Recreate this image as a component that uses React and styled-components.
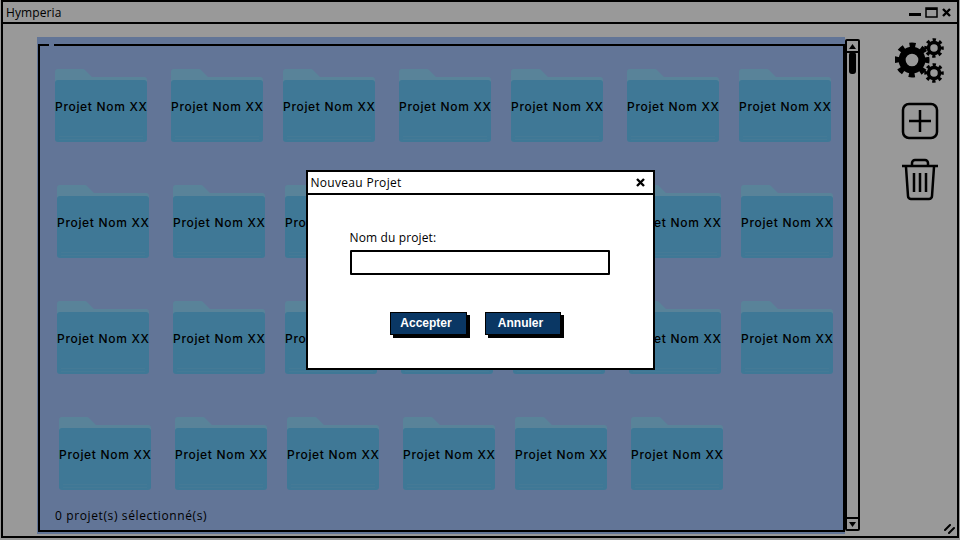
import React from "react";
import styled, { createGlobalStyle } from "styled-components";

const GlobalStyle = createGlobalStyle`
  html, body {
    margin: 0;
    padding: 0;
    width: 960px;
    height: 540px;
    overflow: hidden;
    background: #fff;
  }
`;

const Page = styled.div`
  position: relative;
  width: 960px;
  height: 540px;
  padding: 0 1px 2px 1px;
  box-sizing: border-box;
  font-family: "Open Sans", sans-serif;
  color: #000;
`;

const Window = styled.div`
  display: flex;
  flex-direction: column;
  width: 100%;
  height: 100%;
  box-sizing: border-box;
  border: 2px solid #000;
`;

const TitleBar = styled.div`
  display: flex;
  align-items: center;
  justify-content: space-between;
  height: 20px;
  flex: none;
  padding: 0 6px 0 3px;
  border-bottom: 2px solid #000;
`;

const WindowTitle = styled.span`
  font-size: 12px;
  letter-spacing: 0.1px;
`;

const WindowControls = styled.div`
  display: flex;
  align-items: center;
  gap: 4px;
`;

const Body = styled.div`
  flex: 1;
  display: flex;
  min-height: 0;
  padding: 13px 0 2px 34px;
`;

const Selection = styled.div`
  display: flex;
  width: 808px;
  padding: 7px 0 2px 1px;
  box-sizing: border-box;
  background: #a3c3fc;
`;

const Frame = styled.div`
  position: relative;
  flex: 1;
  display: flex;
  flex-direction: column;
  box-sizing: border-box;
  border: 2px solid #000;
  padding: 23px 0 0 15px;
`;

const FrameNotch = styled.span`
  position: absolute;
  top: -2px;
  left: 9px;
  width: 5px;
  height: 2px;
  background: #a3c3fc;
`;

const FolderRow = styled.div`
  flex: none;
  display: grid;
  grid-template-columns: 116px 112px 116px 112px 116px 112px 92px;
  justify-content: start;
  height: 116px;
  padding-left: ${(p) => p.$indent}px;
`;

const Folder = styled.div`
  display: grid;
  width: 92px;
  height: 73px;
  & > * {
    grid-area: 1 / 1;
  }
`;

const FolderLabel = styled.span`
  align-self: start;
  margin-top: 30px;
  font-family: "Inter", sans-serif;
  font-size: 12px;
  font-weight: 500;
  line-height: 16px;
  white-space: nowrap;
  letter-spacing: 0.68px;
  position: relative;
`;

const StatusText = styled.span`
  position: absolute;
  left: 15px;
  bottom: 6px;
  font-size: 12px;
  letter-spacing: 0.62px;
`;

const Scrollbar = styled.div`
  display: flex;
  flex-direction: column;
  justify-content: space-between;
  width: 15px;
  margin: 2px 0 0 0;
  height: 492px;
  box-sizing: border-box;
  border: 2px solid #000;
  border-radius: 2px;
  position: relative;
`;

const ScrollButton = styled.div`
  height: 10px;
  display: flex;
  align-items: center;
  justify-content: center;
  ${(p) => (p.$down ? "border-top: 2px solid #000;" : "border-bottom: 2px solid #000;")}
`;

const ScrollThumb = styled.div`
  position: absolute;
  top: 11px;
  left: 2px;
  width: 7px;
  height: 22px;
  background: #000;
  border-radius: 3px;
`;

const Tools = styled.div`
  display: flex;
  flex-direction: column;
  align-items: center;
  width: 72px;
  padding: 1px 0 0 24px;
  gap: 18px;
`;

const Grip = styled.svg`
  position: absolute;
  right: 5px;
  bottom: 6px;
`;

const Overlay = styled.div`
  position: absolute;
  inset: 0;
  display: flex;
  align-items: flex-start;
  justify-content: center;
  padding-top: 170px;
  box-sizing: border-box;
  background: rgba(0, 0, 0, 0.4);
`;

const Dialog = styled.div`
  display: flex;
  flex-direction: column;
  width: 349px;
  height: 200px;
  box-sizing: border-box;
  background: #fff;
  border: 2px solid #000;
`;

const DialogTitle = styled.div`
  display: flex;
  align-items: center;
  justify-content: space-between;
  height: 21px;
  flex: none;
  padding: 0 8px 0 3px;
  border-bottom: 2px solid #000;
  font-size: 12px;
  letter-spacing: 0.3px;
`;

const DialogBody = styled.div`
  display: flex;
  flex-direction: column;
  padding: 35px 0 0 42px;
`;

const FieldLabel = styled.label`
  font-size: 12px;
  line-height: 16px;
  letter-spacing: 0.13px;
  margin-bottom: 4px;
`;

const TextInput = styled.div`
  width: 260px;
  height: 25px;
  box-sizing: border-box;
  border: 2px solid #000;
  border-radius: 1px;
  background: #fff;
`;

const Actions = styled.div`
  display: flex;
  gap: 18px;
  margin: 37px 0 0 40px;
`;

const Button = styled.button`
  width: ${(p) => p.$width}px;
  height: 23px;
  box-sizing: border-box;
  border: 1px solid #000;
  padding: 0 4px 1px 0;
  background: #0a3764;
  color: #fff;
  box-shadow: 3px 3px 0 #000;
  font-family: "Liberation Sans", sans-serif;
  font-size: 12px;
  font-weight: 700;
`;

const FolderIcon = () => (
  <svg width="92" height="73" viewBox="0 0 92 73">
    <path
      d="M0 3 a3 3 0 0 1 3 -3 H28 a3 3 0 0 1 2 1 L37 8 H89 a3 3 0 0 1 3 3 V30 H0 Z"
      fill="#95dbff"
    />
    <rect y="11" width="92" height="62" rx="3" fill="#69c8fa" />
    <rect x="4" y="67" width="84" height="1" fill="#74ccfa" />
    <rect x="4" y="70" width="84" height="1" fill="#74ccfa" />
  </svg>
);

const Gear = ({ cx, cy, r, stroke }) => {
  // teeth are a dashed ring, the body a plain ring under it
  const toothR = r * 0.86;
  const length = 2 * Math.PI * toothR;
  return (
    <g fill="none" stroke="#000">
      <circle cx={cx} cy={cy} r={r * 0.58} strokeWidth={stroke} />
      <circle
        cx={cx}
        cy={cy}
        r={toothR}
        strokeWidth={r * 0.34}
        strokeDasharray={`${length / 16} ${length / 16}`}
        transform={`rotate(-11 ${cx} ${cy})`}
      />
    </g>
  );
};

const GearsIcon = () => (
  <svg width="50" height="46" viewBox="0 0 50 46">
    <Gear cx={17} cy={22} r={17} stroke={7} />
    <Gear cx={39} cy={10} r={9.5} stroke={3.5} />
    <Gear cx={39} cy={35} r={9.5} stroke={3.5} />
  </svg>
);

const PlusIcon = () => (
  <svg width="38" height="38" viewBox="0 0 38 38" fill="none" stroke="#000" strokeWidth="2.5">
    <rect x="2" y="2" width="34" height="34" rx="6" />
    <path d="M19 8 V30 M8 19 H30" />
  </svg>
);

const TrashIcon = () => (
  <svg width="38" height="43" viewBox="0 0 38 43" fill="none" stroke="#000" strokeWidth="2.5">
    <path d="M1 8 H37" />
    <path d="M11 7 V5 a3 3 0 0 1 3 -3 H24 a3 3 0 0 1 3 3 V7" />
    <path d="M5 9 L7 38 a3 3 0 0 0 3 3 H28 a3 3 0 0 0 3 -3 L33 9" />
    <path d="M13 15 V34 M19 15 V34 M25 15 V34" />
  </svg>
);

const CloseIcon = () => (
  <svg width="9" height="9" viewBox="0 0 9 9" stroke="#000" strokeWidth="2.4">
    <path d="M1 1 L8 8 M8 1 L1 8" />
  </svg>
);

const rows = [
  { indent: 0, count: 7 },
  { indent: 2, count: 7 },
  { indent: 2, count: 7 },
  { indent: 4, count: 6 },
];

export default function App() {
  return (
    <Page>
      <GlobalStyle />
      <Window>
        <TitleBar>
          <WindowTitle>Hymperia</WindowTitle>
          <WindowControls>
            <svg width="12" height="10" viewBox="0 0 12 10">
              <rect y="6" width="12" height="3" fill="#000" />
            </svg>
            <svg width="13" height="11" viewBox="0 0 13 11" fill="none" stroke="#000" strokeWidth="1.5">
              <rect x="1" y="1" width="11" height="9" />
              <path d="M1 2 H12" strokeWidth="2" />
            </svg>
            <CloseIcon />
          </WindowControls>
        </TitleBar>
        <Body>
          <Selection>
            <Frame>
              <FrameNotch />
              {rows.map((row, r) => (
                <FolderRow key={r} $indent={row.indent}>
                  {Array.from({ length: row.count }, (_, i) => (
                    <Folder key={i}>
                      <FolderIcon />
                      <FolderLabel>Projet Nom XX</FolderLabel>
                    </Folder>
                  ))}
                </FolderRow>
              ))}
              <StatusText>0 projet(s) sélectionné(s)</StatusText>
            </Frame>
          </Selection>
          <Scrollbar>
            <ScrollButton>
              <svg width="7" height="5" viewBox="0 0 7 5">
                <path d="M3.5 0 L7 5 H0 Z" fill="#000" />
              </svg>
            </ScrollButton>
            <ScrollThumb />
            <ScrollButton $down>
              <svg width="7" height="5" viewBox="0 0 7 5">
                <path d="M0 0 H7 L3.5 5 Z" fill="#000" />
              </svg>
            </ScrollButton>
          </Scrollbar>
          <Tools>
            <GearsIcon />
            <PlusIcon />
            <TrashIcon />
          </Tools>
        </Body>
        <Grip width="11" height="10" viewBox="0 0 11 10" stroke="#000" strokeWidth="2" strokeLinecap="round">
          <path d="M1 6 L6 1 M5 9 L10 4" />
        </Grip>
      </Window>
      <Overlay>
        <Dialog>
          <DialogTitle>
            <span>Nouveau Projet</span>
            <CloseIcon />
          </DialogTitle>
          <DialogBody>
            <FieldLabel>Nom du projet:</FieldLabel>
            <TextInput />
            <Actions>
              <Button $width={77}>Accepter</Button>
              <Button $width={76}>Annuler</Button>
            </Actions>
          </DialogBody>
        </Dialog>
      </Overlay>
    </Page>
  );
}
